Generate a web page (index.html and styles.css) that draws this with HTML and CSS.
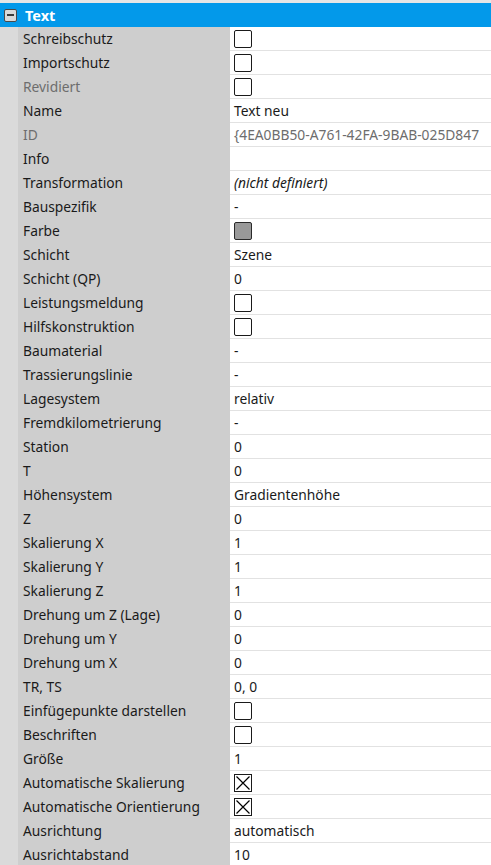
FILE: index.html
```html
<!DOCTYPE html>
<html lang="de">
<head>
<meta charset="UTF-8">
<meta name="viewport" content="width=device-width, initial-scale=1.0">
<title>Eigenschaften</title>
<link rel="stylesheet" href="styles.css">
</head>
<body>

    <div class="grid">
        <div class="category">
            <span class="toggle"><span class="toggle-bar"></span></span>
            <span class="category-title">Text</span>
        </div>

        <div class="row"><div class="name">Schreibschutz</div><div class="value"><span class="check"></span></div></div>
        <div class="row"><div class="name">Importschutz</div><div class="value"><span class="check"></span></div></div>
        <div class="row readonly"><div class="name">Revidiert</div><div class="value"><span class="check"></span></div></div>
        <div class="row"><div class="name">Name</div><div class="value">Text neu</div></div>
        <div class="row readonly"><div class="name">ID</div><div class="value">{4EA0BB50-A761-42FA-9BAB-025D847</div></div>
        <div class="row"><div class="name">Info</div><div class="value"></div></div>
        <div class="row"><div class="name">Transformation</div><div class="value"><em>(nicht definiert)</em></div></div>
        <div class="row"><div class="name">Bauspezifik</div><div class="value">-</div></div>
        <div class="row"><div class="name">Farbe</div><div class="value"><span class="swatch"></span></div></div>
        <div class="row"><div class="name">Schicht</div><div class="value">Szene</div></div>
        <div class="row"><div class="name">Schicht (QP)</div><div class="value">0</div></div>
        <div class="row"><div class="name">Leistungsmeldung</div><div class="value"><span class="check"></span></div></div>
        <div class="row"><div class="name">Hilfskonstruktion</div><div class="value"><span class="check"></span></div></div>
        <div class="row"><div class="name">Baumaterial</div><div class="value">-</div></div>
        <div class="row"><div class="name">Trassierungslinie</div><div class="value">-</div></div>
        <div class="row"><div class="name">Lagesystem</div><div class="value">relativ</div></div>
        <div class="row"><div class="name">Fremdkilometrierung</div><div class="value">-</div></div>
        <div class="row"><div class="name">Station</div><div class="value">0</div></div>
        <div class="row"><div class="name">T</div><div class="value">0</div></div>
        <div class="row"><div class="name">Höhensystem</div><div class="value">Gradientenhöhe</div></div>
        <div class="row"><div class="name">Z</div><div class="value">0</div></div>
        <div class="row"><div class="name">Skalierung X</div><div class="value">1</div></div>
        <div class="row"><div class="name">Skalierung Y</div><div class="value">1</div></div>
        <div class="row"><div class="name">Skalierung Z</div><div class="value">1</div></div>
        <div class="row"><div class="name">Drehung um Z (Lage)</div><div class="value">0</div></div>
        <div class="row"><div class="name">Drehung um Y</div><div class="value">0</div></div>
        <div class="row"><div class="name">Drehung um X</div><div class="value">0</div></div>
        <div class="row"><div class="name">TR, TS</div><div class="value">0, 0</div></div>
        <div class="row"><div class="name">Einfügepunkte darstellen</div><div class="value"><span class="check"></span></div></div>
        <div class="row"><div class="name">Beschriften</div><div class="value"><span class="check"></span></div></div>
        <div class="row"><div class="name">Größe</div><div class="value">1</div></div>
        <div class="row"><div class="name">Automatische Skalierung</div><div class="value"><span class="check checked"><svg viewBox="0 0 16 16"><path d="M1.5 1.5 L14.5 14.5 M14.5 1.5 L1.5 14.5" stroke="#000" stroke-width="1.2" fill="none"/></svg></span></div></div>
        <div class="row"><div class="name">Automatische Orientierung</div><div class="value"><span class="check checked"><svg viewBox="0 0 16 16"><path d="M1.5 1.5 L14.5 14.5 M14.5 1.5 L1.5 14.5" stroke="#000" stroke-width="1.2" fill="none"/></svg></span></div></div>
        <div class="row"><div class="name">Ausrichtung</div><div class="value">automatisch</div></div>
        <div class="row"><div class="name">Ausrichtabstand</div><div class="value">10</div></div>
    </div>

</body>
</html>
```

FILE: styles.css
```css
body {
    margin: 0;
    padding-top: 3px;
    background: #e6e6e6;
    font-family: "Noto Sans", "Open Sans", sans-serif;
    font-size: 13.8px;
    color: #1a1a1a;
    overflow: hidden;
}
.grid {
    width: 491px;
}
.category {
    height: 24px;
    display: flex;
    align-items: center;
    background: #0399ea;
    color: #ffffff;
}
.toggle {
    width: 11px;
    height: 11px;
    margin-left: 4px;
    margin-right: 8px;
    border: 1px solid #4a4a4a;
    border-radius: 2px;
    background: #d9d9d9;
    display: flex;
    align-items: center;
    justify-content: center;
}
.toggle-bar {
    width: 7px;
    height: 2px;
    background: #3c3c3c;
}
.category-title {
    font-weight: bold;
    font-size: 14.5px;
}
.row {
    display: flex;
    height: 24px;
    background: #dadada;
    padding-left: 18px;
}
.name {
    width: 207px;
    padding-left: 5px;
    background: #cecece;
    line-height: 24px;
    white-space: nowrap;
}
.value {
    flex: 1;
    padding-left: 4px;
    background: #ffffff;
    border-bottom: 1px solid #e2e2e2;
    line-height: 23px;
    white-space: nowrap;
    overflow: hidden;
    display: flex;
    align-items: center;
}
.readonly .name,
.readonly .value {
    color: #6d6d6d;
}
.check {
    width: 16px;
    height: 16px;
    border: 1px solid #1a1a1a;
    border-radius: 2px;
    background: #ffffff;
    display: flex;
}
.check.checked {
    border-radius: 0;
}
.check svg {
    width: 16px;
    height: 16px;
}
.swatch {
    width: 16px;
    height: 16px;
    border: 1px solid #2a2a2a;
    border-radius: 2px;
    background: #999999;
}
```
